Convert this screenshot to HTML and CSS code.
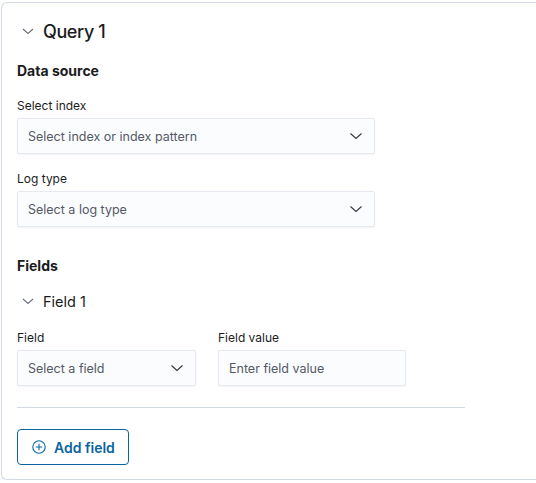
FILE: index.html
```html
<!DOCTYPE html>
<html>
<head>
<meta charset="utf-8">
<link rel="stylesheet" href="styles.css">
</head>
<body>
<div class="panel">
  <div class="title-row">
    <svg class="chev" width="16" height="16" viewBox="0 0 16 16"><path d="M3 6l5 4.5L13 6" fill="none" stroke="#69707D" stroke-width="1.1"/></svg>
    <span class="title">Query 1</span>
  </div>
  <h3 class="section">Data source</h3>
  <div class="form-row">
    <label class="label">Select index</label>
    <div class="control wide">
      <span class="placeholder">Select index or index pattern</span>
      <svg class="caret" width="14" height="14" viewBox="0 0 14 14"><path d="M1.5 4.5l5.5 5 5.5-5" fill="none" stroke="#343741" stroke-width="1.1"/></svg>
    </div>
  </div>
  <div class="form-row">
    <label class="label">Log type</label>
    <div class="control wide">
      <span class="placeholder">Select a log type</span>
      <svg class="caret" width="14" height="14" viewBox="0 0 14 14"><path d="M1.5 4.5l5.5 5 5.5-5" fill="none" stroke="#343741" stroke-width="1.1"/></svg>
    </div>
  </div>
  <h3 class="section fields">Fields</h3>
  <div class="title-row sub">
    <svg class="chev" width="16" height="16" viewBox="0 0 16 16"><path d="M3 6l5 4.5L13 6" fill="none" stroke="#69707D" stroke-width="1.1"/></svg>
    <span class="subtitle">Field 1</span>
  </div>
  <div class="field-grid">
    <div class="form-row">
      <label class="label">Field</label>
      <div class="control narrow">
        <span class="placeholder">Select a field</span>
        <svg class="caret" width="14" height="14" viewBox="0 0 14 14"><path d="M1.5 4.5l5.5 5 5.5-5" fill="none" stroke="#343741" stroke-width="1.1"/></svg>
      </div>
    </div>
    <div class="form-row">
      <label class="label">Field value</label>
      <div class="control value">
        <span class="placeholder">Enter field value</span>
      </div>
    </div>
  </div>
  <hr class="rule">
  <button class="add-btn">
    <svg width="14" height="14" viewBox="0 0 14 14"><circle cx="7" cy="7" r="6.2" fill="none" stroke="#0B64A0" stroke-width="1.1"/><path d="M7 3.8v6.4M3.8 7h6.4" stroke="#0B64A0" stroke-width="1.1"/></svg>
    <span>Add field</span>
  </button>
</div>
</body>
</html>
```
FILE: styles.css
```css
* { box-sizing: border-box; }
body {
  margin: 0;
  background: #fff;
  font-family: Inter, "Noto Sans", sans-serif;
  color: #1a1c21;
}
.panel {
  margin: 2px 0 0 1px;
  height: 478px;
  border: 1px solid #d3dae6;
  border-right: 0;
  border-radius: 6px 0 0 6px;
  padding: 16px 0 0 15px;
  box-shadow: 0 1px 2px rgba(0,0,0,0.04);
}
.title-row {
  display: flex;
  align-items: center;
  gap: 7px;
  height: 24px;
  padding-left: 3px;
}
.title {
  font-size: 18px;
  font-weight: 500;
  letter-spacing: -0.4px;
}
.section {
  margin: 18px 0 0 0;
  font-size: 14px;
  font-weight: 700;
  line-height: 20px;
}
.section.fields { margin-top: 29px; }
.form-row {
  display: flex;
  flex-direction: column;
  margin-top: 17px;
}
.label {
  font-size: 12px;
  line-height: 16px;
  color: #1a1c21;
  margin-bottom: 4px;
}
.control {
  display: flex;
  align-items: center;
  justify-content: space-between;
  height: 36px;
  background: #fbfcfd;
  border: 1px solid #e6e9f0;
  box-shadow: 0 1px 2px rgba(0,0,0,0.05);
  padding: 0 10px;
  border-radius: 2px;
}
.control.wide { width: 358px; }
.control.narrow { width: 179px; }
.control.value { width: 188px; }
.placeholder {
  font-size: 12.5px;
  color: #535966;
}
.caret { margin-right: 1px; }
.sub { margin-top: 14px; height: 22px; }
.subtitle { font-size: 14.5px; }
.field-grid {
  display: flex;
  gap: 22px;
  margin-top: 1px;
}
.rule {
  width: 448px;
  margin: 21px 0 0 0;
  border: 0;
  border-top: 1px solid #d3dae6;
  height: 0;
}
.add-btn {
  margin-top: 21px;
  display: flex;
  align-items: center;
  gap: 8px;
  width: 112px;
  height: 36px;
  padding: 0 0 0 14px;
  background: #fff;
  border: 1px solid #0B64A0;
  border-radius: 4px;
  font-family: Inter, "Noto Sans", sans-serif;
  font-size: 14px;
  font-weight: 600;
  color: #0B64A0;
}
```
